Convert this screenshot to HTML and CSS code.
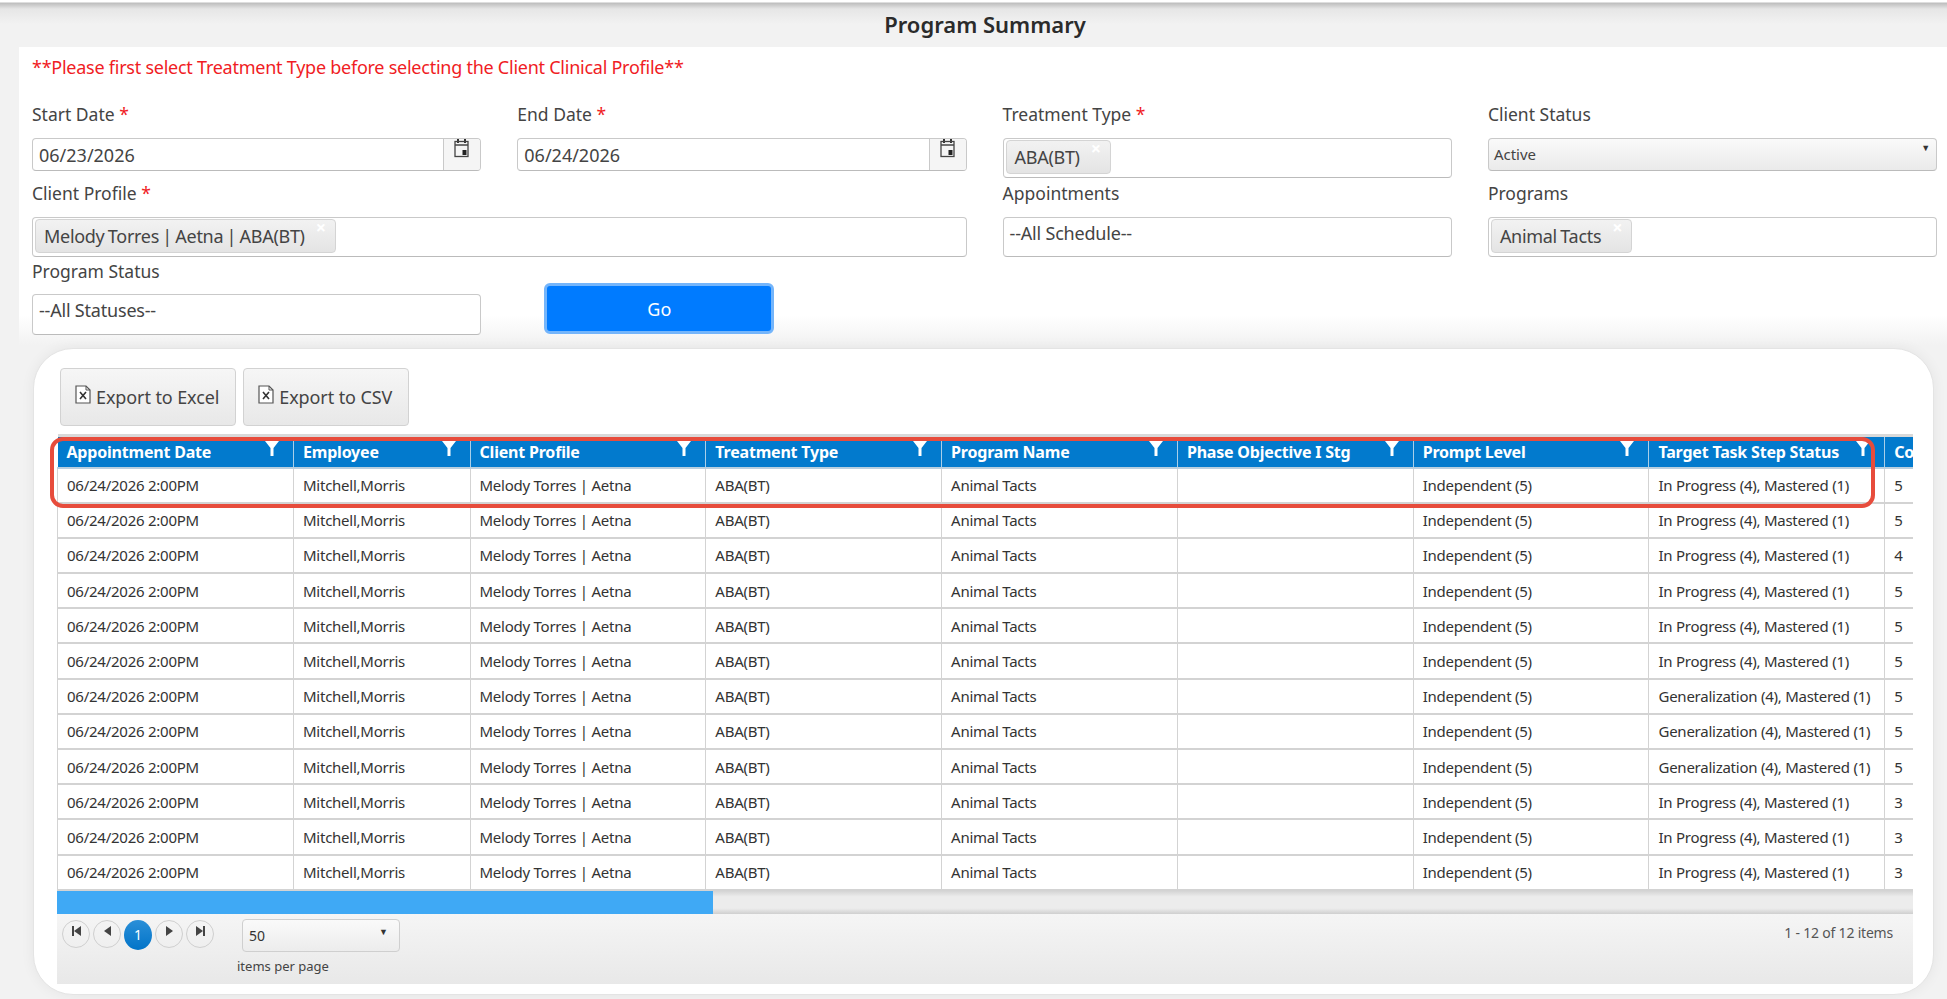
FILE: index.html
```html
<!DOCTYPE html>
<html lang="en">
<head>
    <meta charset="UTF-8">
    <meta name="viewport" content="width=device-width, initial-scale=1.0">
    <title>Program Summary</title>
    <link rel="stylesheet" href="styles.css">
</head>
<body>

    <h1 class="page-title">Program Summary</h1>

    <main class="panel">
        <p class="notice">**Please first select Treatment Type before selecting the Client Clinical Profile**</p>

        <!-- Filters -->
        <div class="filters">
            <div class="field">
                <label>Start Date <span class="req">*</span></label>
                <div class="box date-box">
                    <span class="date-value">06/23/2026</span>
                    <span class="date-btn">
                        <svg width="15" height="19" viewBox="0 0 15 19"><path d="M4 0v4M11 0v4" stroke="#333" stroke-width="2" fill="none"/><rect x="1" y="2.500" width="13" height="15" fill="none" stroke="#444" stroke-width="1.300"/><path d="M1 6h13" stroke="#444" stroke-width="1.300"/><rect x="8.500" y="11" width="4" height="5" fill="#222"/></svg>
                    </span>
                </div>
            </div>
            <div class="field">
                <label>End Date <span class="req">*</span></label>
                <div class="box date-box">
                    <span class="date-value">06/24/2026</span>
                    <span class="date-btn">
                        <svg width="15" height="19" viewBox="0 0 15 19"><path d="M4 0v4M11 0v4" stroke="#333" stroke-width="2" fill="none"/><rect x="1" y="2.500" width="13" height="15" fill="none" stroke="#444" stroke-width="1.300"/><path d="M1 6h13" stroke="#444" stroke-width="1.300"/><rect x="8.500" y="11" width="4" height="5" fill="#222"/></svg>
                    </span>
                </div>
            </div>
            <div class="field">
                <label>Treatment Type <span class="req">*</span></label>
                <div class="box multi">
                    <span class="chip">ABA(BT)<span class="chip-x">×</span></span>
                </div>
            </div>
            <div class="field">
                <label>Client Status</label>
                <div class="box select-box">
                    <span>Active</span>
                    <span class="caret">▼</span>
                </div>
            </div>

            <div class="field span-2 row-2">
                <label>Client Profile <span class="req">*</span></label>
                <div class="box multi">
                    <span class="chip">Melody Torres | Aetna | ABA(BT)<span class="chip-x">×</span></span>
                </div>
            </div>
            <div class="field row-2">
                <label>Appointments</label>
                <div class="box multi placeholder">--All Schedule--</div>
            </div>
            <div class="field row-2">
                <label>Programs</label>
                <div class="box multi">
                    <span class="chip">Animal Tacts<span class="chip-x">×</span></span>
                </div>
            </div>

            <div class="field row-3">
                <label>Program Status</label>
                <div class="box multi status-box placeholder">--All Statuses--</div>
            </div>
            <div class="go-cell">
                <button class="go-btn">Go</button>
            </div>
        </div>

        <!-- Results card -->
        <section class="card">
            <div class="toolbar">
                <button class="export-btn">
                    <svg width="16" height="19" viewBox="0 0 16 19"><path d="M1 1h10l4 4v13H1z" fill="#fff" stroke="#555" stroke-width="1.200"/><path d="M11 1v4h4" fill="none" stroke="#555"/><path d="M5 7l6 7M11 7l-6 7" stroke="#333" stroke-width="1.600"/></svg>
                    Export to Excel
                </button>
                <button class="export-btn">
                    <svg width="16" height="19" viewBox="0 0 16 19"><path d="M1 1h10l4 4v13H1z" fill="#fff" stroke="#555" stroke-width="1.200"/><path d="M11 1v4h4" fill="none" stroke="#555"/><path d="M5 7l6 7M11 7l-6 7" stroke="#333" stroke-width="1.600"/></svg>
                    Export to CSV
                </button>
            </div>

            <div class="grid-wrap">
                <div class="highlight"></div>
                <div class="grid-scroll">
                    <table class="grid">
                        <colgroup>
                            <col class="c-date"><col class="c-emp"><col class="c-std"><col class="c-std"><col class="c-std"><col class="c-std"><col class="c-std"><col class="c-std"><col class="c-last">
                        </colgroup>
                        <thead id="gridHead"></thead>
                        <tbody id="gridBody"></tbody>
                    </table>
                </div>
                <div class="scrollbar"><div class="scroll-thumb"></div></div>
                <div class="pager">
                    <div class="pager-left">
                        <span class="page-btn"><i class="bar"></i><i class="tri-l"></i></span>
                        <span class="page-btn"><i class="tri-l"></i></span>
                        <span class="page-btn current">1</span>
                        <span class="page-btn"><i class="tri-r"></i></span>
                        <span class="page-btn"><i class="tri-r"></i><i class="bar"></i></span>
                    </div>
                    <div class="page-size">
                        <div class="size-select"><span>50</span><span class="caret">▼</span></div>
                        <span class="size-label">items per page</span>
                    </div>
                    <div class="pager-info">1 - 12 of 12 items</div>
                </div>
            </div>
        </section>
    </main>

    <script>
        const headers = ["Appointment Date", "Employee", "Client Profile", "Treatment Type", "Program Name", "Phase Objective I Stg", "Prompt Level", "Target Task Step Status", "Count"];
        const inProgress = "In Progress (4), Mastered (1)";
        const generalization = "Generalization (4), Mastered (1)";
        const rows = [
            [inProgress, 5], [inProgress, 5], [inProgress, 4], [inProgress, 5],
            [inProgress, 5], [inProgress, 5], [generalization, 5], [generalization, 5],
            [generalization, 5], [inProgress, 3], [inProgress, 3], [inProgress, 3]
        ];
        const funnel = '<svg class="funnel" width="14" height="15" viewBox="0 0 14 15"><path d="M0 0h14L8.500 7v8h-3V7z" fill="#fff"/></svg>';

        document.getElementById("gridHead").innerHTML = "<tr>" + headers.map((h, i) =>
            `<th>${h}${i < headers.length - 1 ? funnel : ""}</th>`).join("") + "</tr>";

        document.getElementById("gridBody").innerHTML = rows.map(r => `<tr>
            <td>06/24/2026 2:00PM</td><td>Mitchell,Morris</td><td>Melody Torres | Aetna</td>
            <td>ABA(BT)</td><td>Animal Tacts</td><td></td><td>Independent (5)</td>
            <td>${r[0]}</td><td>${r[1]}</td></tr>`).join("");
    </script>

</body>
</html>
```

FILE: styles.css
```css
* {
    box-sizing: border-box;
}
body {
    margin: 0;
    height: 999px;
    overflow: hidden;
    font-family: "Noto Sans", "Open Sans", sans-serif;
    color: #333;
    background-color: #f2f2f2;
}

/* Title bar */
.page-title {
    margin: 0;
    height: 47px;
    padding: 9px 0 0 23px;
    text-align: center;
    font-size: 22px;
    line-height: 30px;
    font-weight: 600;
    color: #2b2b2b;
    background: linear-gradient(to bottom, #fff 0, #fff 2px, #bdbdbd 3px, #e6e6e6 9px, #f2f2f2 24px);
}

/* White panel */
.panel {
    margin-left: 19px;
    height: 952px;
    padding: 0 10px 0 13px;
    background: linear-gradient(to bottom, #fff 0, #fff 268px, #f2f2f2 298px);
}
.notice {
    margin: 0;
    padding-top: 8px;
    height: 56px;
    font-size: 18px;
    line-height: 24px;
    letter-spacing: -0.25px;
    color: #f01c24;
}

/* Filters */
.filters {
    display: grid;
    grid-template-columns: repeat(4, 449.3px);
    column-gap: 36px;
    grid-template-rows: 78px 78px 89px;
    height: 245px;
}
.field {
    display: flex;
    flex-direction: column;
}
.span-2 {
    grid-column: span 2;
}
.field label {
    display: block;
    height: 35px;
    font-size: 17.500px;
    line-height: 23px;
    color: #444;
}
.row-2 label {
    height: 36px;
    line-height: 25px;
}
.row-3 label {
    height: 35px;
    line-height: 25px;
}
.req {
    color: #f01c24;
}
.box {
    border: 1px solid #c9c9c9;
    border-bottom-color: #bbb;
    border-radius: 4px;
    background: #fff;
    font-size: 18px;
    color: #444;
}
.date-box {
    display: flex;
    height: 33px;
    overflow: hidden;
}
.date-value {
    flex: 1;
    padding: 3px 6px;
    line-height: 26px;
}
.date-btn {
    width: 37px;
    padding: 0 0 0 10px;
    background: #f5f5f5;
    border-left: 1px solid #c9c9c9;
    line-height: 0;
}
.select-box {
    display: flex;
    justify-content: space-between;
    height: 33px;
    padding: 3px 6px 0 5px;
    font-size: 15px;
    line-height: 25px;
    background: linear-gradient(#fafafa, #eaeaea);
}
.caret {
    font-size: 9px;
    line-height: 12px;
    color: #333;
}
.multi {
    height: 40px;
    padding: 1px 2px;
}
.placeholder {
    padding: 2px 6px;
    line-height: 26px;
    letter-spacing: -0.2px;
}
.status-box {
    height: 41px;
}
.chip {
    display: inline-block;
    position: relative;
    height: 34px;
    padding: 0 30px 0 8px;
    line-height: 33px;
    letter-spacing: -0.3px;
    word-spacing: -1px;
    border: 1px solid #d4d4d4;
    border-radius: 4px;
    background: linear-gradient(#f2f2f2, #e4e4e4);
}
.chip-x {
    position: absolute;
    top: -9px;
    right: 9px;
    font-size: 18px;
    font-weight: 700;
    color: #fff;
}
.go-cell {
    padding: 24px 0 0 27px;
}
.go-btn {
    display: block;
    width: 230px;
    height: 51px;
    border: 3px solid #74b5fb;
    border-radius: 6px;
    background: #007bff;
    color: #fff;
    font-family: inherit;
    font-size: 18px;
}

/* Results card */
.card {
    width: 1901px;
    height: 647px;
    margin-left: 1px;
    padding: 19px 20px 0 23px;
    background: #fff;
    border: 1px solid #e4e4e4;
    border-radius: 40px;
    box-shadow: 0 0 14px rgba(0, 0, 0, 0.06);
}
.toolbar {
    display: flex;
    gap: 7px;
    height: 66px;
    padding-left: 3px;
}
.export-btn {
    display: flex;
    align-items: center;
    gap: 5px;
    height: 58px;
    padding: 0 16px 0 14px;
    border: 1px solid #d2d2d2;
    border-radius: 4px;
    background: linear-gradient(#f6f6f6, #e8e8e8);
    color: #444;
    font-family: inherit;
    font-size: 18px;
    letter-spacing: -0.1px;
}
.export-btn svg {
    margin-top: -6px;
}

/* Grid */
.grid-wrap {
    position: relative;
    width: 1856px;
}
.highlight {
    position: absolute;
    left: -7px;
    top: 3px;
    width: 1825px;
    height: 71px;
    border: 4px solid #e74c3c;
    border-radius: 13px;
    z-index: 2;
}
.grid-scroll {
    overflow: hidden;
}
.grid {
    table-layout: fixed;
    width: 1977.300px;
    border-collapse: collapse;
    font-size: 15px;
    letter-spacing: -0.25px;
}
.c-date { width: 236px; }
.c-emp { width: 176.500px; }
.c-std { width: 235.800px; }
.c-last { width: 150px; }
.grid th {
    position: relative;
    height: 32px;
    padding: 0 9px;
    text-align: left;
    font-size: 16px;
    font-weight: 700;
    letter-spacing: -0.2px;
    color: #fff;
    background: #027acd;
    border-top: 3px solid #d9d9d9;
    border-bottom: 2px solid #b9cfdf;
    border-right: 1px solid #a9cfe9;
    white-space: nowrap;
}
.funnel {
    position: absolute;
    top: 4px;
    right: 14px;
}
.grid td {
    height: 35.200px;
    padding: 0 9px;
    color: #333;
    background: #fff;
    border: 1px solid #d3d3d3;
    border-top: 0;
    border-bottom-width: 2px;
    white-space: nowrap;
}

/* Scrollbar and pager */
.scrollbar {
    height: 23px;
    background: linear-gradient(#d4d4d4, #ececec 25%, #ececec 75%, #cfcfcf);
}
.scroll-thumb {
    width: 656px;
    height: 100%;
    background: #3fa9f5;
}
.pager {
    position: relative;
    display: flex;
    height: 70px;
    padding: 6px 20px 0 5px;
    background: linear-gradient(#f5f5f5, #e8e8e8);
}
.pager-left {
    display: flex;
    gap: 3px;
    height: 30px;
}
.page-btn {
    display: flex;
    justify-content: center;
    padding-top: 5px;
    width: 28px;
    height: 28px;
    border: 1px solid #cfcfcf;
    border-radius: 50%;
    font-size: 14px;
}
.page-btn.current {
    height: 30px;
    align-items: center;
    padding-top: 0;
    border: 0;
    color: #fff;
    background: linear-gradient(#2a8fd8, #0274c8);
}
.tri-l, .tri-r {
    width: 0;
    height: 0;
    border-top: 5px solid transparent;
    border-bottom: 5px solid transparent;
}
.tri-l {
    border-right: 7px solid #444;
}
.tri-r {
    border-left: 7px solid #444;
}
.bar {
    width: 2px;
    height: 10px;
    background: #444;
}
.page-size {
    margin-left: 28px;
    margin-top: -1px;
}
.size-select {
    display: flex;
    justify-content: space-between;
    width: 158px;
    height: 33px;
    margin-bottom: 5px;
    padding: 0 11px 0 6px;
    border: 1px solid #cfcfcf;
    border-radius: 4px;
    background: linear-gradient(#fafafa, #ececec);
    font-size: 14px;
    line-height: 32px;
}
.size-select .caret {
    line-height: 24px;
}
.size-label {
    display: block;
    margin-left: -5px;
    font-size: 13px;
    color: #444;
}
.pager-info {
    margin-left: auto;
    margin-top: 3px;
    font-size: 14px;
    letter-spacing: -0.2px;
    color: #555;
}
```
